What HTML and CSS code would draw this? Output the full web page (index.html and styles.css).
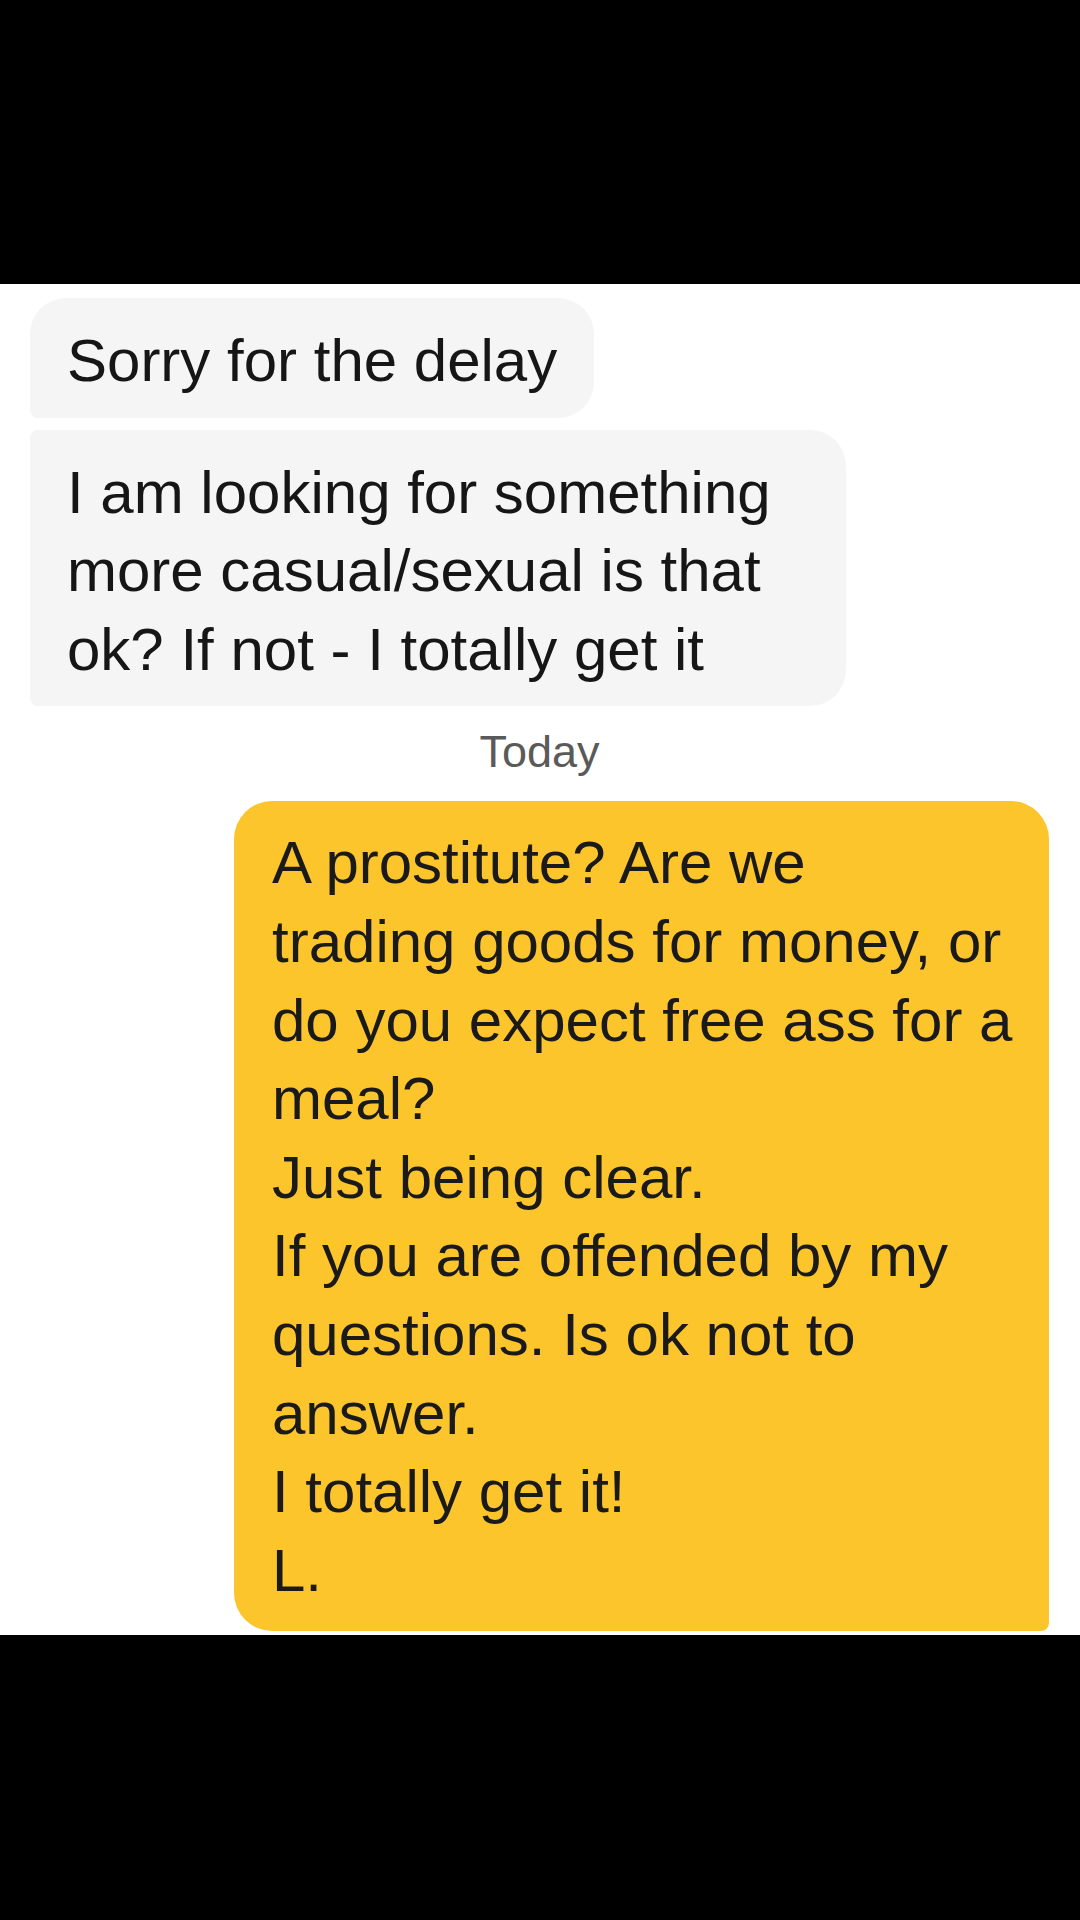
FILE: index.html
```html
<!DOCTYPE html>
<html lang="en">
<head>
<meta charset="utf-8">
<title>Chat</title>
<link rel="stylesheet" href="styles.css">
</head>
<body>
<div class="screen">
  <div class="bar-top"></div>
  <main class="chat">
    <div class="bubble received first">Sorry for the delay</div>
    <div class="bubble received last">I am looking for something more casual/sexual is that ok? If not - I totally get it</div>
    <div class="day">Today</div>
    <div class="bubble sent">A prostitute? Are we<br>trading goods for money, or<br>do you expect free ass for a<br>meal?<br>Just being clear.<br>If you are offended by my<br>questions. Is ok not to<br>answer.<br>I totally get it!<br>L.</div>
  </main>
  <div class="bar-bottom"></div>
</div>
</body>
</html>
```

FILE: styles.css
```css
* { box-sizing: border-box; }

html, body {
  margin: 0;
  padding: 0;
  background: #000;
}

.screen {
  width: 1080px;
  height: 1920px;
  display: flex;
  flex-direction: column;
  background: #000;
  font-family: "Liberation Sans", Arial, sans-serif;
}

.bar-top {
  height: 284px;
  flex: none;
  background: #000;
}

.chat {
  background: #fff;
  display: flex;
  flex-direction: column;
  padding: 14px 31px 4px 30px;
}

.bar-bottom {
  flex: 1;
  background: #000;
}

.bubble {
  font-size: 60px;
  line-height: 78.6px;
}

.received {
  align-self: flex-start;
  max-width: 816px;
  background: #f5f5f5;
  color: #161616;
  padding: 24px 37px 17px 37px;
  border-radius: 8px 36px 36px 8px;
}

.received.first {
  border-top-left-radius: 36px;
}

.received + .received {
  margin-top: 12px;
}

.day {
  align-self: center;
  margin: 16px 0 19px;
  font-size: 45px;
  line-height: 60px;
  color: #5a5a5a;
}

.sent {
  align-self: flex-end;
  width: 815px;
  background: #fdc52c;
  color: #1a1a1a;
  padding: 23px 28px 21px 38px;
  border-radius: 38px 38px 8px 38px;
  white-space: nowrap;
}
```
